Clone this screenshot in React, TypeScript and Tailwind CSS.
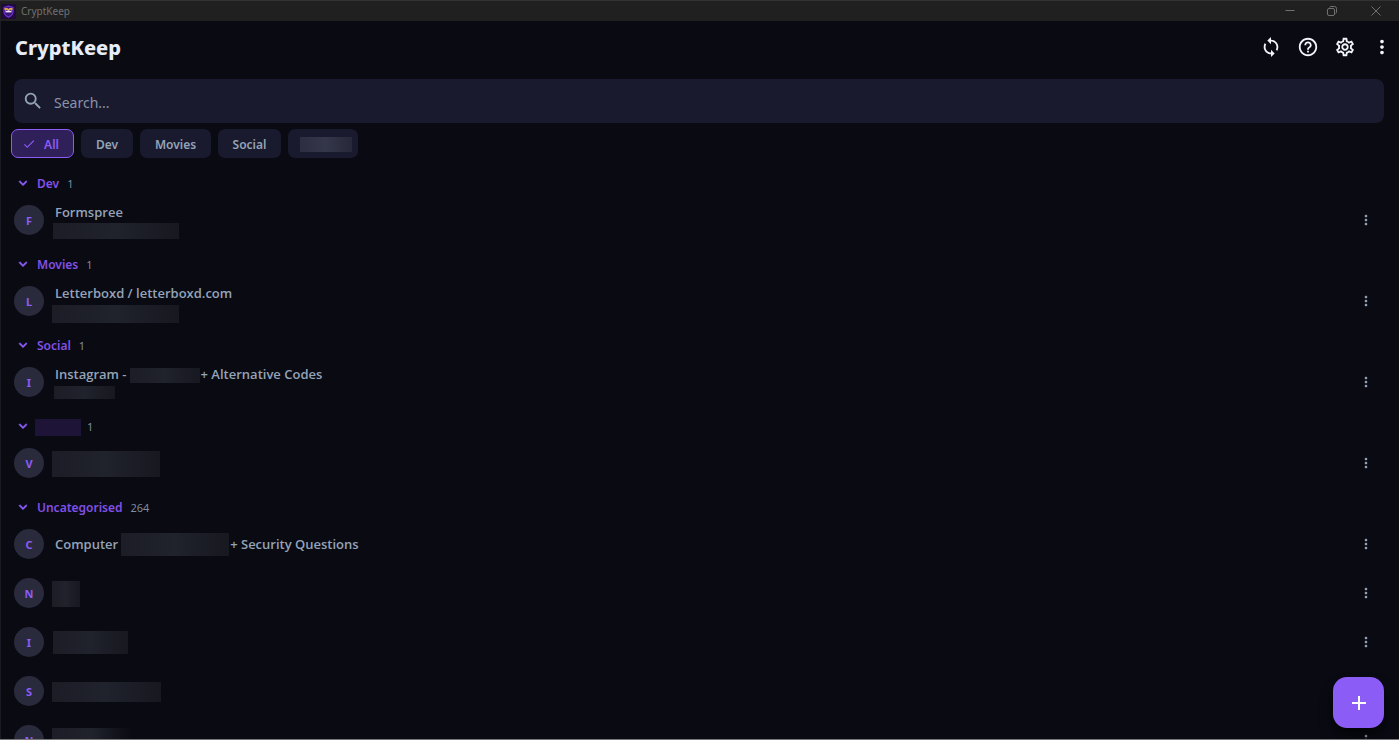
import { useState } from "react";
import {
  MdAdd, MdCheck, MdExpandMore, MdHelpOutline, MdMoreVert,
  MdOutlineSettings, MdSearch, MdSync,
} from "react-icons/md";

// ── Types ─────────────────────────────────────────────────
interface Entry {
  initial: string;
  title?: string;
  titleEnd?: string;
  mask?: string;     // hidden part of the title
  subMask?: string;  // hidden account name
}

interface Category {
  key: string;
  label?: string;
  count: number;
  entries: Entry[];
}

// ── Data ──────────────────────────────────────────────────
const FILTERS = [
  { key: "all",     label: "All",    width: "w-[63px]" },
  { key: "dev",     label: "Dev",    width: "w-[52px]" },
  { key: "movies",  label: "Movies", width: "w-[71px]" },
  { key: "social",  label: "Social", width: "w-[63px]" },
  { key: "private", label: "",       width: "w-[70px]" },
];

const CATEGORIES: Category[] = [
  {
    key: "dev", label: "Dev", count: 1,
    entries: [{ initial: "F", title: "Formspree", subMask: "ml-px h-4 w-[126px]" }],
  },
  {
    key: "movies", label: "Movies", count: 1,
    entries: [{ initial: "L", title: "Letterboxd / letterboxd.com", subMask: "mt-px h-[18px] w-[127px]" }],
  },
  {
    key: "social", label: "Social", count: 1,
    entries: [{
      initial: "I", title: "Instagram -", titleEnd: "+ Alternative Codes",
      mask: "ml-[3px] mr-px h-[15px] w-[70px]", subMask: "ml-0.5 mt-px h-[13px] w-[61px]",
    }],
  },
  {
    key: "private", count: 1,
    entries: [{ initial: "V", mask: "h-[26px] w-[108px]" }],
  },
  {
    key: "uncategorised", label: "Uncategorised", count: 264,
    entries: [
      { initial: "C", title: "Computer", titleEnd: "+ Security Questions", mask: "ml-[3px] mr-px h-[23px] w-[108px]" },
      { initial: "N", mask: "h-[26px] w-7" },
      { initial: "I", mask: "ml-px h-[23px] w-[75px]" },
      { initial: "S", mask: "h-5 w-[109px]" },
      { initial: "N", mask: "h-[26px] w-20 to-transparent" },
    ],
  },
];

// ── Window chrome ─────────────────────────────────────────
function AppLogo() {
  return (
    <svg viewBox="0 0 15 15" className="size-[15px]" aria-hidden="true">
      <rect width="15" height="15" fill="#210b3d" />
      <path d="M3 3.5 7.5 2.2 12 3.5v4.2c0 2.6-2 4.2-4.5 5.4C5 11.900 3 10.300 3 7.700Z" fill="#3a1478" stroke="#6d35d0" strokeWidth="1.200" />
      <path d="M3.500 4h3l1 .9 1-.9h3v2h-8Z" fill="#e0a04a" />
      <path d="M4.500 6.200h6v2.200h-6Z" fill="#f1e4e8" />
      <path d="M5 6.500h1.500M8.500 6.500H10" stroke="#3a1478" strokeWidth=".8" />
    </svg>
  );
}

function TitleBar() {
  return (
    <div className="flex h-[21px] flex-none items-center justify-between border-t border-[#333333] bg-[#202020] text-[#707070]">
      <div className="flex items-center gap-[5px] pl-px">
        <AppLogo />
        <span className="text-[10px] leading-4">CryptKeep</span>
      </div>
      <div className="flex">
        <button type="button" aria-label="Minimize" className="flex h-[18px] w-[42px] items-center justify-center">
          <svg viewBox="0 0 10 10" className="size-[10px]" stroke="currentColor"><path d="M.5 4.500h9" /></svg>
        </button>
        <button type="button" aria-label="Restore" className="flex h-[18px] w-[42px] items-center justify-center">
          <svg viewBox="0 0 10 10" className="size-[10px]" fill="none" stroke="currentColor">
            <rect x=".5" y="2.500" width="7" height="7" rx="1.500" />
            <path d="M2.500 1.500c.3-.7.800-1 1.500-1h3.500a2 2 0 0 1 2 2V6c0 .7-.3 1.200-1 1.500" />
          </svg>
        </button>
        <button type="button" aria-label="Close" className="flex h-[18px] w-[46px] items-center justify-center">
          <svg viewBox="0 0 10 10" className="size-[10px]" stroke="currentColor"><path d="m.5.5 9 9M9.500.5l-9 9" /></svg>
        </button>
      </div>
    </div>
  );
}

// ── List pieces ───────────────────────────────────────────
function Mask({ className }: { className: string }) {
  return <span className={`block flex-none bg-linear-to-r from-[#1c1d26] via-[#20222c] to-[#171820] ${className}`} />;
}

function EntryRow({ entry }: { entry: Entry }) {
  return (
    <li className="flex h-[49px] flex-none justify-between pl-[13px] pr-[25px]">
      <div className="flex gap-2">
        <span className="mt-[9px] flex size-[30px] items-center justify-center rounded-full bg-[#2a2a3d] pt-0.5 text-[11px] font-bold text-[#8b5cf6]">
          {entry.initial}
        </span>
        <div className={entry.subMask ? "pt-[7px]" : "flex items-center"}>
          <div className="flex h-5 items-center font-['Open_Sans','Noto_Sans',sans-serif] text-[13px] font-semibold text-[#94a3b8]">
            {entry.title && <span className="pl-[3px]">{entry.title}</span>}
            {entry.mask && <Mask className={entry.mask} />}
            {entry.titleEnd && <span>{entry.titleEnd}</span>}
          </div>
          {entry.subMask && <Mask className={entry.subMask} />}
        </div>
      </div>
      <button type="button" aria-label="Entry options" className="flex items-center pb-0.5 text-[#94a3b8]">
        <MdMoreVert className="size-4" />
      </button>
    </li>
  );
}

function CategorySection({ category }: { category: Category }) {
  const [open, setOpen] = useState(true);

  return (
    <section>
      <button
        type="button"
        aria-expanded={open}
        onClick={() => setOpen((v) => !v)}
        className="flex h-8 w-full items-center pl-3.5 pt-2 text-xs"
      >
        <MdExpandMore className={`mb-0.5 size-4 text-[#8b5cf6] [&>path:not([fill=none])]:stroke-1 ${open ? "" : "-rotate-90"}`} />
        {category.label
          ? <span className="ml-1.5 mr-2 font-semibold text-[#8250e6]">{category.label}</span>
          : <span className="ml-1 mr-1.5 h-[17px] w-[46px] bg-[#1e1438]" />}
        <span className="text-[11px] text-[#7f8ca0]">{category.count}</span>
      </button>
      {open && (
        <ul>
          {category.entries.map((entry, i) => <EntryRow key={i} entry={entry} />)}
        </ul>
      )}
    </section>
  );
}

// ── App ───────────────────────────────────────────────────
export default function App() {
  const [query,  setQuery]  = useState("");
  const [filter, setFilter] = useState("all");

  const visible = CATEGORIES.filter((c) => filter === "all" || c.key === filter);

  return (
    <div className="relative flex h-screen flex-col overflow-hidden border-b border-[#77777b] bg-[#090a12] font-['Noto_Sans','Open_Sans',sans-serif]">
      <TitleBar />

      <div className="flex min-h-0 flex-1 flex-col border-l border-[#1b1c23]">
        <header className="flex h-[52px] flex-none items-center justify-between pl-3.5 pr-1.5">
          <h1 className="pt-px text-[20px] font-extrabold text-[#e6edf8]">CryptKeep</h1>
          <div className="flex gap-[15px] text-[#f1f5f9]">
            <button type="button" aria-label="Sync"><MdSync className="size-[22px]" /></button>
            <button type="button" aria-label="Help"><MdHelpOutline className="size-[22px]" /></button>
            <button type="button" aria-label="Settings"><MdOutlineSettings className="size-[22px]" /></button>
            <button type="button" aria-label="More"><MdMoreVert className="size-[22px]" /></button>
          </div>
        </header>

        {/* Search */}
        <label className="ml-[13px] mr-[15px] mt-1.5 flex h-11 flex-none items-center rounded-lg bg-[#1a1a2e]">
          <MdSearch className="ml-2 size-[22px] flex-none text-[#94a3b8]" />
          <input
            type="text"
            aria-label="Search"
            placeholder="Search..."
            value={query}
            onChange={(e) => setQuery(e.target.value)}
            className="ml-2.5 h-full min-w-0 flex-1 bg-transparent pt-0.5 text-sm text-[#e6edf8] outline-none placeholder:text-[#8794a9]"
          />
        </label>

        {/* Category filters */}
        <div className="flex flex-none gap-[7px] pl-2.5 pt-1.5">
          {FILTERS.map(({ key, label, width }) => (
            <button
              key={key}
              type="button"
              aria-label={label || "Hidden category"}
              aria-pressed={filter === key}
              onClick={() => setFilter(key)}
              className={`flex h-[29px] items-center justify-center rounded-[7px] text-xs font-semibold ${width} ${
                filter === key
                  ? "border border-[#8b5cf6] bg-[#30205a] pr-1 text-[#8b5cf6]"
                  : "bg-[#1a1a2e] text-[#94a3b8]"
              }`}
            >
              {filter === key && <MdCheck className="mr-2 size-[14px]" />}
              {label
                ? <span className="pt-[3px]">{label}</span>
                : <span className="ml-1.5 mt-px h-[15px] w-[52px] bg-linear-to-r from-[#2d2e40] via-[#34364a] to-[#27283a]" />}
            </button>
          ))}
        </div>

        <main className="min-h-0 flex-1 overflow-hidden pt-1.5">
          {visible.map((category) => <CategorySection key={category.key} category={category} />)}
        </main>
      </div>

      <button
        type="button"
        aria-label="Add entry"
        className="absolute bottom-[11px] right-[15px] flex size-[51px] items-center justify-center rounded-[14px] bg-[#8b5cf6] text-white shadow-lg shadow-black/60"
      >
        <MdAdd className="size-6" />
      </button>
    </div>
  );
}
